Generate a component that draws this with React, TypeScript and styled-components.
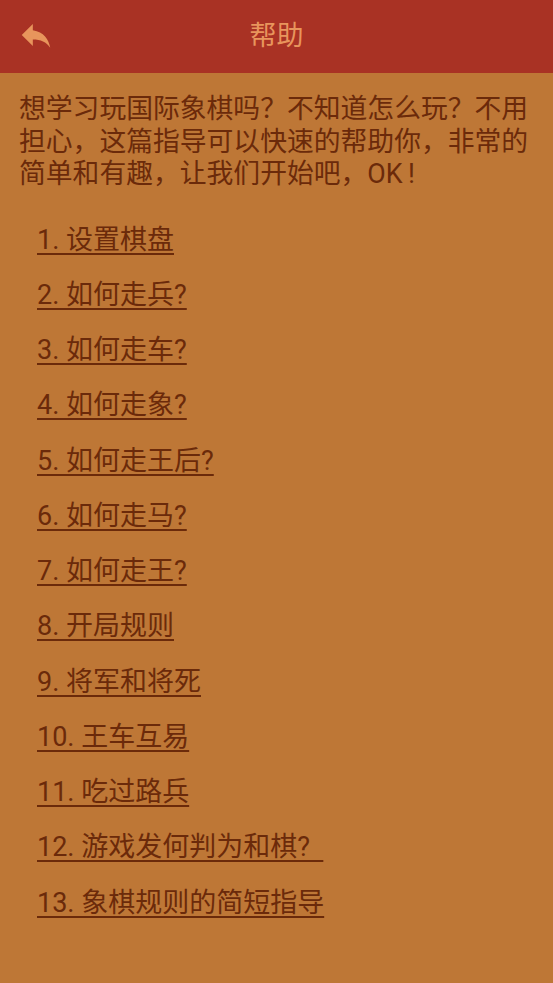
import styled, { createGlobalStyle } from "styled-components";

const GlobalStyle = createGlobalStyle`
  html, body {
    margin: 0;
    padding: 0;
    background: #be7736;
  }
  body {
    font-family: Roboto, "Noto Sans CJK SC", sans-serif;
  }
`;

const topics = [
  "1. 设置棋盘",
  "2. 如何走兵?",
  "3. 如何走车?",
  "4. 如何走象?",
  "5. 如何走王后?",
  "6. 如何走马?",
  "7. 如何走王?",
  "8. 开局规则",
  "9. 将军和将死",
  "10. 王车互易",
  "11. 吃过路兵",
  "12. 游戏发何判为和棋?\u00a0\u00a0",
  "13. 象棋规则的简短指导",
];

export default function App() {
  return (
    <Page>
      <GlobalStyle />
      <Header>
        <BackButton aria-label="back">
          <svg width="38" height="38" viewBox="0 0 24 24" fill="#e8955c">
            <path d="M10 9V5l-7 7 7 7v-4.1c5 0 8.5 1.6 11 5.1-1-5-4-10-11-11z" />
          </svg>
        </BackButton>
        <Title>帮助</Title>
      </Header>
      <Intro>
        {"想学习玩国际象棋吗？不知道怎么玩？不用担心，这篇指导可以快速的帮助你，非常的简单和有趣，让我们开始吧，OK\u2009!"}
      </Intro>
      <TopicList>
        {topics.map((t) => (
          <Topic key={t}>
            <TopicLink href="#">{t}</TopicLink>
          </Topic>
        ))}
      </TopicList>
    </Page>
  );
}

const Page = styled.div`
  width: 553px;
  min-height: 983px;
  background: #be7736;
  display: flex;
  flex-direction: column;
`;

const Header = styled.div`
  height: 73px;
  background: #a93224;
  display: flex;
  align-items: center;
  justify-content: center;
  position: relative;
`;

const BackButton = styled.div`
  position: absolute;
  left: 17px;
  top: 16px;
  width: 38px;
  height: 38px;
  svg {
    display: block;
  }
`;

const Title = styled.h1`
  margin: 0;
  font-size: 27px;
  font-weight: 400;
  color: #e8955c;
  line-height: 1;
`;

const Intro = styled.p`
  margin: 0;
  padding: 20px 19px 0 19px;
  font-size: 26.8px;
  line-height: 32.5px;
  color: #6b2a0a;
`;

const TopicList = styled.ul`
  list-style: none;
  margin: 0;
  padding: 19px 0 0 37px;
  display: flex;
  flex-direction: column;
`;

const Topic = styled.li`
  height: 55.25px;
  display: flex;
  align-items: center;
`;

const TopicLink = styled.a`
  font-size: 27px;
  color: #6b2a0a;
  text-decoration: underline;
  text-underline-offset: 4px;
  text-decoration-thickness: 2px;
  white-space: pre;
`;
